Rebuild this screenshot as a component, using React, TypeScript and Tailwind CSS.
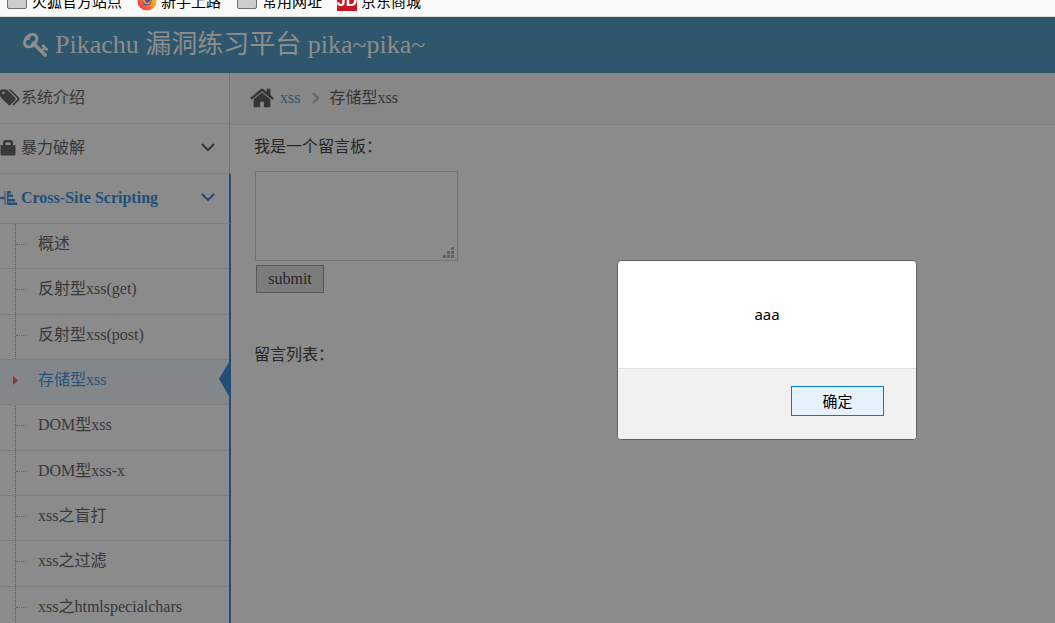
import { ReactNode } from "react";

const menuIcons = {
  tags: (
    <svg viewBox="0 0 1920 1792" className="h-[19px] w-5" fill="currentColor" aria-hidden="true">
      <path d="M448 448q0-53-37.5-90.5t-90.5-37.5-90.5 37.5-37.5 90.5 37.5 90.5 90.5 37.5 90.5-37.5 37.5-90.5zm1067 576q0 53-37 90l-491 492q-39 37-91 37-53 0-90-37l-715-716q-38-37-64.5-101t-26.5-117v-416q0-52 38-90t90-38h416q53 0 117 26.5t102 64.5l715 714q37 39 37 91zm384 0q0 53-37 90l-491 492q-39 37-91 37-36 0-59-14t-53-45l470-470q37-37 37-90 0-52-37-91l-715-714q-38-38-102-64.5t-117-26.5h224q53 0 117 26.5t102 64.5l715 714q37 39 37 91z" />
    </svg>
  ),
  lock: (
    <svg viewBox="0 0 16 18" className="h-[18px] w-4" fill="currentColor" aria-hidden="true">
      <path fillRule="evenodd" d="M1 6h2V4a3 3 0 0 1 3-3h4a3 3 0 0 1 3 3v2h1.500q1 0 1 1V15.500q0 1-1 1H1.500q-1 0-1-1V7q0-1 .5-1zm4.300 0h5.400V4.500q0-1.300-1.300-1.300H6.600q-1.300 0-1.300 1.300z" />
    </svg>
  ),
  align: (
    <svg viewBox="0 0 17 16" className="h-4 w-[17px]" fill="currentColor" aria-hidden="true">
      <path d="M4.500 1h1v14h-1zM0 7h2.500V5.500L4.500 8l-2 2.500V9H0zM7 1h4v2.500H8.500v1H13V7H8.500v2H15v2.500H8.500v1H17V15H7z" />
    </svg>
  ),
};

function Chevron() {
  return (
    <svg viewBox="0 0 14 9" className="h-[9px] w-[14px]" fill="none" stroke="currentColor" strokeWidth="2" aria-hidden="true">
      <path d="M1 1l6 6 6-6" />
    </svg>
  );
}

function MenuRow({ icon, children, chevron, active }: { icon: ReactNode; children: ReactNode; chevron?: boolean; active?: boolean }) {
  return (
    <a
      href="#"
      className={`flex h-[50px] items-center border-b border-[#7f7f7f] pb-0.5 ${active ? "border-r-2 border-r-[#224f78] pr-[14px] font-bold text-[#224f78]" : "pr-[14px] text-[#383838]"}`}
    >
      <span className="w-[21px]">{icon}</span>
      <span className="flex-1">{children}</span>
      {chevron && <Chevron />}
    </a>
  );
}

const subItems = ["概述", "反射型xss(get)", "反射型xss(post)", "存储型xss", "DOM型xss", "DOM型xss-x", "xss之盲打", "xss之过滤", "xss之htmlspecialchars"];

function SubItem({ label }: { label: string }) {
  const selected = label === "存储型xss";
  return (
    <li className={`relative border-b border-dotted border-[#777] ${selected ? "bg-[#848789] text-[#27527c]" : "text-[#383838]"}`}>
      <a href="#" className="flex h-full items-center pb-1 pl-[38px]">{label}</a>
      {selected ? (
        <>
          <span className="absolute top-3.5 left-2.5 h-4 w-3 bg-[#848789]" />
          <svg viewBox="0 0 5 9" className="absolute top-4 left-[13px] h-[9px] w-[5px]" fill="#8c3f28" aria-hidden="true"><path d="M0 0l5 4.5L0 9z" /></svg>
          <svg viewBox="0 0 10 34" className="absolute top-0.5 right-0 h-[34px] w-2.5" fill="#224f78" aria-hidden="true"><path d="M10 0v34L0 17z" /></svg>
        </>
      ) : (
        <span className="absolute top-5 left-4 w-2.5 border-t border-dotted border-[#52616e]" />
      )}
    </li>
  );
}

function Folder() {
  return <span className="h-[15px] w-5 rounded-[2px] border border-[#6f6f6f] bg-[#ccc]" />;
}

function Firefox() {
  return (
    <svg viewBox="0 0 20 20" className="h-5 w-5" aria-hidden="true">
      <defs>
        <linearGradient id="flame" x1="1" y1="0" x2="0" y2="1">
          <stop offset="0" stopColor="#ffdf36" /><stop offset=".45" stopColor="#ff9420" /><stop offset="1" stopColor="#e8176b" />
        </linearGradient>
      </defs>
      <circle cx="10" cy="10" r="9.5" fill="url(#flame)" />
      <circle cx="10" cy="10" r="4.500" fill="#3155c6" />
      <path d="M5 5l5 1.500-2 3 3 1 3-2q0 5-4 5-5-1-5-8z" fill="#ff8a16" />
      <path d="M9 8.500l4-1 .5 2-3 2.500-2-1z" fill="#3155c6" />
    </svg>
  );
}

export default function App() {
  return (
    <div className="flex h-screen flex-col overflow-hidden bg-[#8b8b8b] font-['Liberation_Serif','Noto_Sans_CJK_SC',serif] text-base text-[#262626]">
      <nav className="flex h-[17px] shrink-0 items-end overflow-hidden border-b border-[#ddd] bg-[#f9f9f9] pb-[3px] pl-[7px] font-['Noto_Sans_CJK_SC',sans-serif] text-[15px] text-black">
        <a href="#" className="flex h-6 w-[130px] items-center gap-[5px] leading-6"><Folder />火狐官方站点</a>
        <a href="#" className="flex h-6 w-[100px] items-center gap-1 leading-6"><Firefox />新手上路</a>
        <a href="#" className="flex h-6 w-[100px] items-center gap-[5px] leading-6"><Folder />常用网址</a>
        <a href="#" className="flex h-6 items-center gap-1 leading-6">
          <span className="flex h-5 w-5 items-center justify-center bg-[#c81623] font-['Liberation_Sans',sans-serif] text-base font-bold text-white">JD</span>
          京东商城
        </a>
      </nav>
      <header className="flex h-14 shrink-0 items-center gap-[5px] bg-[#2e566c] pb-0.5 pl-[23px] text-[26px] text-[#8d8d8d]">
        <svg viewBox="0 0 1792 1792" className="h-[27px] w-[27px]" fill="currentColor" aria-hidden="true">
          <path d="M832 512q0-80-56-136t-136-56-136 56-56 136q0 42 19 83-41-19-83-19-80 0-136 56t-56 136 56 136 136 56 136-56 56-136q0-42-19-83 41 19 83 19 80 0 136-56t56-136zm851 704q0 17-49 66t-66 49q-9 0-28.500-16t-36.500-33-38.500-40-24.500-26l-96 96 220 220q28 28 28 68 0 42-39 81t-81 39q-40 0-68-28l-671-671q-176 131-365 131-163 0-265.500-102.500t-102.500-265.500q0-160 95-313t248-248 313-95q163 0 265.500 102.500t102.500 265.500q0 189-131 365l355 355 96-96q-3-3-26-24.500t-40-38.500-33-36.500-16-28.500q0-17 49-66t66-49q13 0 23 10 6 6 46 44.500t82 79.500 86.500 86 73 78 28.500 41z" />
        </svg>
        <h1>Pikachu 漏洞练习平台 pika~pika~</h1>
      </header>
      <div className="flex min-h-0 flex-1">
        <aside className="flex w-[231px] shrink-0 flex-col">
          <div className="mr-px border-r border-[#707070] pt-px">
            <MenuRow icon={menuIcons.tags}>系统介绍</MenuRow>
            <MenuRow icon={menuIcons.lock} chevron>暴力破解</MenuRow>
          </div>
          <MenuRow icon={menuIcons.align} chevron active>Cross-Site Scripting</MenuRow>
          <div className="relative min-h-0 flex-1 border-r-2 border-[#224f78]">
            <span className="absolute top-0 bottom-0 left-[15px] border-l border-dotted border-[#465b6c]" />
            <ul className="grid h-[408px] auto-rows-fr">{subItems.map((label) => <SubItem key={label} label={label} />)}</ul>
          </div>
        </aside>
        <main className="min-w-0 flex-1">
          <nav className="flex h-[52px] items-center border-b border-[#808080] bg-[#878787] pb-px pl-[18px] text-[#343434]">
            <svg viewBox="0 0 1792 1792" className="h-[26px] w-[26px]" fill="currentColor" aria-hidden="true">
              <path d="M1472 992v480q0 26-19 45t-45 19h-384v-384h-256v384h-384q-26 0-45-19t-19-45v-480q0-1 .5-3t.5-3l575-474 575 474q1 2 1 6zm223-69l-62 74q-8 9-21 11h-3q-13 0-21-7l-692-577-692 577q-12 8-24 7-13-2-21-11l-62-74q-8-10-7-23.500t11-21.500l719-599q32-26 76-26t76 26l244 204v-195q0-14 9-23t23-9h192q14 0 23 9t9 23v408l219 182q10 8 11 21.500t-7 23.500z" />
            </svg>
            <a href="#" className="ml-[5px] text-[#2d526d]">xss</a>
            <svg viewBox="0 0 7 12" className="mr-2.5 ml-3 h-3 w-[7px]" fill="none" stroke="#666" strokeWidth="2" aria-hidden="true"><path d="M1 1l5 5-5 5" /></svg>
            <span>存储型xss</span>
          </nav>
          <form className="flex flex-col items-start pl-[23px]" onSubmit={(e) => e.preventDefault()}>
            <label htmlFor="message" className="mt-2.5 leading-6">我是一个留言板：</label>
            <div className="relative mt-3 ml-px">
              <textarea id="message" className="block h-[90px] w-[203px] resize-none border border-[#737373] bg-transparent p-1 outline-none" />
              <svg viewBox="0 0 11 11" className="absolute right-1 bottom-[3px] h-[11px] w-[11px]" fill="#606060" aria-hidden="true">
                <path d="M8 0h3v3H8zM4 4h3v3H4zM8 4h3v3H8zM0 8h3v3H0zM4 8h3v3H4zM8 8h3v3H8z" />
              </svg>
            </div>
            <button type="submit" className="mt-1 ml-0.5 h-7 w-[68px] border border-[#595959] bg-[#7c7c7c]">submit</button>
          </form>
          <p className="mt-[50px] pl-[23px] leading-6">留言列表：</p>
        </main>
      </div>
      <div role="dialog" aria-modal="true" aria-label="aaa" className="absolute top-[260px] left-[617px] flex h-[180px] w-[300px] flex-col overflow-hidden rounded-sm border border-[#626262] bg-white font-['Noto_Sans','Noto_Sans_CJK_SC',sans-serif] text-[15px] text-black">
        <p className="flex flex-1 items-center justify-center">aaa</p>
        <div className="flex h-[71px] items-start justify-end border-t border-[#dfdfdf] bg-[#f1f1f1] pt-[17px] pr-8">
          <button type="button" className="h-[30px] w-[93px] border border-[#0078d7] bg-[#e5f1fb]">确定</button>
        </div>
      </div>
    </div>
  );
}
